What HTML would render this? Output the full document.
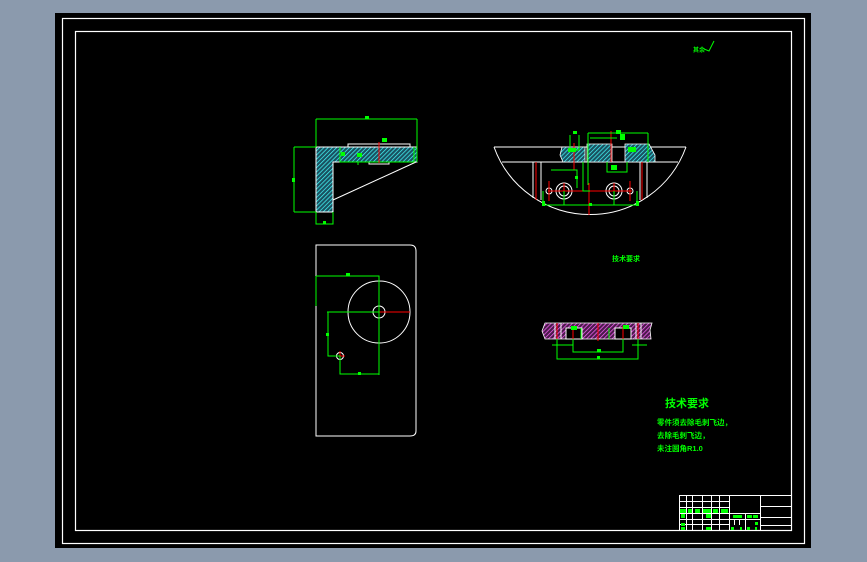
<!DOCTYPE html>
<html><head><meta charset="utf-8"><style>
html,body{margin:0;padding:0;width:867px;height:562px;overflow:hidden;background:#8b9aad;}
svg{position:absolute;left:0;top:0;}
text{font-family:"Liberation Sans","Noto Sans CJK SC",sans-serif;fill:#0f0;font-weight:bold;}
</style></head><body>
<svg width="867" height="562" viewBox="0 0 867 562">
<defs>
<pattern id="hc" patternUnits="userSpaceOnUse" width="3" height="3" patternTransform="rotate(45)">
<rect width="3" height="3" fill="#1a5060"/><line x1="0" y1="0" x2="0" y2="3" stroke="#4ff" stroke-width="1.4"/></pattern>
<pattern id="hm" patternUnits="userSpaceOnUse" width="3" height="3" patternTransform="rotate(45)">
<rect width="3" height="3" fill="#4a1a4a"/><line x1="0" y1="0" x2="0" y2="3" stroke="#f6f" stroke-width="1.4"/></pattern>
</defs>
<rect x="55" y="13" width="756" height="535" fill="#000"/>
<g fill="none" stroke="#fff" stroke-width="1.2">
<rect x="62.5" y="18.5" width="742" height="525"/>
<rect x="75.5" y="31.5" width="716" height="499"/>
</g>
<path d="M316 147H417V162H333V212H316Z" fill="url(#hc)" stroke="#fff" stroke-width="1"/>
<g fill="none" stroke="#fff" stroke-width="1">
<path d="M333 200L416 162"/><path d="M348 147V144H410V147"/><path d="M369 162V164H389V162"/>
</g>
<g fill="none" stroke="#0f0" stroke-width="1">
<path d="M316 119H417M316 119V147M417 119V162"/>
<path d="M294 147H316M294 212H316M294 147V212"/>
<path d="M316 212V224H333V212"/>
<path d="M340 147V162H414V147M358 162V165"/>
</g>
<path d="M379 142V163" stroke="#f00"/>
<rect x="365" y="116" width="4" height="3" fill="#0f0"/><rect x="292" y="178" width="3" height="4" fill="#0f0"/>
<rect x="341" y="152" width="4" height="4" fill="#0f0"/><rect x="357" y="153" width="5" height="4" fill="#0f0"/><rect x="382" y="138" width="5" height="4" fill="#0f0"/><rect x="323" y="221" width="3" height="3" fill="#0f0"/>
<g fill="none" stroke="#fff" stroke-width="1">
<path d="M494 147H686"/><path d="M494 147A102 102 0 0 0 686 147" />
<path d="M502 162H678"/>
<path d="M533 162V198M541 162V200M640 162V200M647 162V198"/>
<circle cx="564" cy="191" r="8"/><circle cx="564" cy="191" r="5"/>
<circle cx="614" cy="191" r="8"/><circle cx="614" cy="191" r="5"/>
<circle cx="549" cy="191" r="3"/><circle cx="630" cy="191" r="3"/>
</g>
<path d="M562 147H585V162H563L560 155Z" fill="url(#hc)" stroke="#fff" stroke-width="0.8"/>
<path d="M587 144H612V162H587Z" fill="url(#hc)" stroke="#fff" stroke-width="0.8"/>
<path d="M625 144H649L655 155V162H625Z" fill="url(#hc)" stroke="#fff" stroke-width="0.8"/>
<g fill="none" stroke="#f00" stroke-width="1">
<path d="M536 162V200M642 162V200M589 183V215M574 143V170M611 131V162M548 191H632M564 183V199M614 183V199M549 181V201M630 181V201"/>
</g>
<g fill="none" stroke="#0f0" stroke-width="1">
<path d="M588 133H648M588 133V185M648 133V162"/>
<path d="M590 138H617"/>
<path d="M570 135V150H579V135"/>
<path d="M607 162V172H627V162"/>
<path d="M543 191V202M637 191V202M543 205H637M564 191V205M614 191V205"/>
<path d="M583 162V191H590"/>
<path d="M551 170H577V188"/>
</g>
<rect x="573" y="131" width="4" height="3" fill="#0f0"/><rect x="616" y="130" width="5" height="4" fill="#0f0"/><rect x="620" y="134" width="5" height="6" fill="#0f0"/>
<rect x="568" y="148" width="8" height="4" fill="#0f0"/><rect x="628" y="147" width="8" height="5" fill="#0f0"/><rect x="611" y="165" width="6" height="5" fill="#0f0"/>
<rect x="542" y="201" width="3" height="5" fill="#0f0"/><rect x="636" y="201" width="3" height="5" fill="#0f0"/><rect x="575" y="176" width="3" height="3" fill="#0f0"/><rect x="589" y="203" width="3" height="3" fill="#0f0"/>
<path d="M316 245H410Q416 245 416 251V431Q416 436 410 436H316Z" fill="none" stroke="#fff" stroke-width="1"/>
<g fill="none" stroke="#fff" stroke-width="1"><circle cx="379" cy="312" r="31"/><circle cx="379" cy="312" r="6"/><circle cx="340" cy="356" r="3.5"/></g>
<path d="M379 312H410M340 351V361M335 356H345" stroke="#f00" stroke-width="1"/>
<g fill="none" stroke="#0f0" stroke-width="1">
<path d="M316 276H379V375M316 276V306M327 312H379M328 312V356H340M340 356V374H379"/>
</g>
<rect x="346" y="273" width="4" height="3" fill="#0f0"/><rect x="326" y="333" width="3" height="3" fill="#0f0"/><rect x="358" y="372" width="3" height="3" fill="#0f0"/>
<path d="M545 323H652L650 330L651 339H545L542 331Z" fill="url(#hm)" stroke="#fff" stroke-width="0.8"/>
<g fill="none" stroke="#fff" stroke-width="1">
<path d="M555 323V339M561 323V339M636 323V339M641 323V339"/>
<rect x="566" y="328" width="16" height="11" fill="#000"/><rect x="615" y="328" width="16" height="11" fill="#000"/>
</g>
<path d="M557 323V341M598 323V341M638 323V341M573 326V341M623 326V341" stroke="#f00" stroke-width="1"/>
<g fill="none" stroke="#0f0" stroke-width="1">
<path d="M573 339V352H623V339M557 339V359H638V339M552 345H573M632 345H647M581 328V339M609 328V339"/>
</g>
<rect x="597" y="349" width="4" height="3" fill="#0f0"/><rect x="597" y="356" width="3" height="3" fill="#0f0"/><rect x="571" y="326" width="6" height="4" fill="#0f0"/><rect x="623" y="325" width="6" height="4" fill="#0f0"/>
<text x="612" y="261" font-size="7">技术要求</text>
<text x="665" y="407" font-size="11">技术要求</text>
<text x="657" y="425" font-size="7.5">零件须去除毛刺飞边，</text>
<text x="657" y="438" font-size="7.5">去除毛刺飞边，</text>
<text x="657" y="451" font-size="7.5">未注圆角R1.0</text>
<text x="693" y="52" font-size="6">其余</text>
<path d="M704 49L709 51L714 41" stroke="#0f0" fill="none" stroke-width="1"/>
<g fill="none" stroke="#fff" stroke-width="1">
<rect x="679.5" y="495.5" width="112" height="35"/>
<path d="M729.5 495V530M760.5 495V530M679 501.5H729M679 507.5H729M679 513.5H760M679 519.5H729M679 524.5H729"/>
<path d="M686.5 495V530M692.5 495V530M702.5 495V530M711.5 495V530M719.5 495V530"/>
<path d="M760 506.5H792M760 517.5H792M760 525.5H792M729 519.5H760M745.5 513V530M734.5 519V525M739.5 519V525"/>
</g>
<g fill="#0f0">
<rect x="680" y="509" width="6" height="4"/><rect x="688" y="509" width="4" height="4"/><rect x="695" y="509" width="5" height="4"/><rect x="703" y="509" width="8" height="4"/><rect x="713" y="509" width="5" height="4"/><rect x="721" y="509" width="7" height="4"/>
<rect x="681" y="514" width="4" height="4"/><rect x="706" y="514" width="5" height="4"/><rect x="681" y="523" width="4" height="3"/><rect x="681" y="527" width="4" height="3"/><rect x="706" y="527" width="5" height="3"/>
<rect x="733" y="515" width="9" height="3"/><rect x="747" y="515" width="5" height="3"/><rect x="753" y="515" width="5" height="3"/><rect x="755" y="522" width="3" height="3"/>
<rect x="731" y="527" width="3" height="3"/><rect x="740" y="527" width="2" height="3"/><rect x="747" y="527" width="3" height="3"/><rect x="755" y="527" width="2" height="3"/>
</g>
</svg>
</body></html>
